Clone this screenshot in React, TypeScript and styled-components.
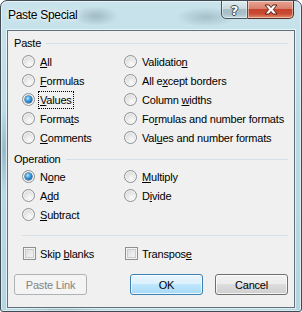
import React from 'react';
import styled, { createGlobalStyle } from 'styled-components';

const GlobalStyle = createGlobalStyle`
  html, body {
    margin: 0;
    padding: 0;
    background: #ffffff;
  }
  body {
    font-family: "Liberation Sans", Arial, sans-serif;
  }
`;

type Option = {
  label: string;
  key: number; // index of the access key letter
};

const pasteOptions: Option[] = [
  { label: 'All', key: 0 },
  { label: 'Formulas', key: 0 },
  { label: 'Values', key: 0 },
  { label: 'Formats', key: 5 },
  { label: 'Comments', key: 0 },
  { label: 'Validation', key: 9 },
  { label: 'All except borders', key: 5 },
  { label: 'Column widths', key: 7 },
  { label: 'Formulas and number formats', key: 2 },
  { label: 'Values and number formats', key: 3 },
];

const operationOptions: Option[] = [
  { label: 'None', key: 1 },
  { label: 'Add', key: 1 },
  { label: 'Subtract', key: 0 },
  { label: 'Multiply', key: 0 },
  { label: 'Divide', key: 1 },
];

const Window = styled.div`
  position: relative;
  width: 302px;
  height: 312px;
  box-sizing: border-box;
  border: 1px solid #3f4a52;
  border-radius: 7px 7px 3px 3px;
  display: flex;
  flex-direction: column;
  overflow: hidden;
  background:
    radial-gradient(ellipse 22px 10px at 95px 15px, rgba(90, 110, 120, 0.35), transparent),
    radial-gradient(ellipse 30px 10px at 205px 16px, rgba(90, 110, 120, 0.3), transparent),
    radial-gradient(ellipse 6px 40px at 3px 150px, rgba(80, 120, 140, 0.35), transparent),
    radial-gradient(ellipse 40px 6px at 60px 310px, rgba(80, 120, 140, 0.3), transparent),
    linear-gradient(180deg, #c9e3ec 0%, #b9dbe5 40%, #b3d6e1 100%);
  box-shadow: inset 0 0 0 1px rgba(255, 255, 255, 0.55);
`;

const TitleBar = styled.div`
  height: 29px;
  flex: none;
  display: flex;
  align-items: flex-start;
  padding: 0 7px 0 7px;
`;

const Title = styled.div`
  font-size: 12px;
  letter-spacing: -0.3px;
  line-height: 29px;
  color: #000;
  text-shadow: 0 0 6px rgba(255, 255, 255, 0.9), 0 0 3px rgba(255, 255, 255, 0.9);
  flex: 1;
`;

const CaptionButtons = styled.div`
  display: flex;
  margin-top: -1px;
`;

const CaptionButton = styled.div<{ $variant: 'help' | 'close' }>`
  width: ${p => (p.$variant === 'close' ? 46 : 27)}px;
  height: 19px;
  box-sizing: border-box;
  border: 1px solid ${p => (p.$variant === 'close' ? '#5b2a22' : '#4a5559')};
  border-left-width: ${p => (p.$variant === 'close' ? 0 : 1)}px;
  border-radius: ${p => (p.$variant === 'close' ? '0 0 5px 0' : '0 0 0 5px')};
  display: flex;
  align-items: center;
  justify-content: center;
  background: ${p =>
    p.$variant === 'close'
      ? 'linear-gradient(180deg, #e8a493 0%, #d9816c 45%, #c5432c 50%, #c94a32 75%, #e08e6d 100%)'
      : 'linear-gradient(180deg, #dfecf0 0%, #c7d9df 45%, #a9bfc7 50%, #a8c0c8 75%, #c3dae2 100%)'};
  box-shadow: inset 0 0 0 1px rgba(255, 255, 255, 0.45);
`;

const HelpGlyph = styled.span`
  font-family: "DejaVu Sans", sans-serif;
  font-weight: bold;
  font-size: 13px;
  line-height: 1;
  color: #fff;
  text-shadow: 1px 0 0 #3c474c, -1px 0 0 #3c474c, 0 1px 0 #3c474c, 0 -1px 0 #3c474c;
  margin-top: 1px;
`;

const Client = styled.div`
  flex: 1;
  margin: 0 6px 3px 6px;
  border: 1px solid #61717c;
  box-shadow: 0 0 0 1px rgba(255, 255, 255, 0.6);
  background: #f0f0f0;
  display: flex;
  flex-direction: column;
  padding-top: 5px;
  font-size: 11px;
  letter-spacing: -0.2px;
  color: #000;
`;

const GroupHeader = styled.div<{ $gap: number }>`
  display: flex;
  align-items: center;
  height: 14px;
  margin-top: ${p => p.$gap}px;
  padding: 0 6px 0 6px;
  gap: 5px;

  &::after {
    content: '';
    flex: 1;
    height: 1px;
    background: #d5dfe5;
  }
`;

const OptionGrid = styled.div<{ $rows: number; $gap: number }>`
  display: grid;
  grid-auto-flow: column;
  grid-template-rows: repeat(${p => p.$rows}, 19px);
  grid-template-columns: 102px 1fr;
  margin-top: ${p => p.$gap}px;
  padding-left: 14px;
`;

const OptionRow = styled.label`
  display: flex;
  align-items: center;
  gap: 5px;
  white-space: nowrap;
`;

const RadioCircle = styled.span<{ $checked?: boolean }>`
  position: relative;
  width: 13px;
  height: 13px;
  box-sizing: border-box;
  border-radius: 50%;
  border: 1px solid #8d9194;
  background: radial-gradient(circle at 60% 70%, #fbfbfb 0%, #e6e6e6 45%, #cfd1d3 100%);
  box-shadow: inset 0 0 0 1px rgba(255, 255, 255, 0.7);
  flex: none;

  &::after {
    content: '';
    display: ${p => (p.$checked ? 'block' : 'none')};
    position: absolute;
    left: 2px;
    top: 2px;
    width: 7px;
    height: 7px;
    border-radius: 50%;
    background: radial-gradient(circle at 40% 35%, #bfe9ff 0%, #3a9ee0 40%, #175c9c 80%, #0f3f6f 100%);
    box-shadow: 0 0 0 0.5px #184c7a;
  }
`;

const CheckBox = styled.span`
  width: 13px;
  height: 13px;
  box-sizing: border-box;
  border: 1px solid #8e8f8f;
  background: linear-gradient(135deg, #d4d6d8 0%, #e9eaea 50%, #f8f8f8 100%);
  box-shadow: inset 0 0 0 1px #f4f4f4, inset 0 0 0 2px #c9cbcd;
  flex: none;
`;

const LabelText = styled.span<{ $focused?: boolean }>`
  padding: 1px 1px;
  margin-left: -1px;
  outline: ${p => (p.$focused ? '1px dotted #000' : 'none')};
  outline-offset: 0;
  line-height: 14px;
`;

const Separator = styled.div`
  height: 1px;
  background: #d5dfe5;
  margin: 11px 6px 0 14px;
`;

const CheckGrid = styled.div`
  display: grid;
  grid-template-columns: 102px 1fr;
  height: 19px;
  margin-top: 8px;
  padding-left: 15px;
`;

const CheckRow = styled.label`
  display: flex;
  align-items: center;
  gap: 4px;
`;

const ButtonRow = styled.div`
  display: flex;
  gap: 12px;
  margin-top: 11px;
  padding: 0 6px 0 6px;
`;

const PushButton = styled.button<{ $kind?: 'default' | 'disabled' }>`
  width: 73px;
  height: 21px;
  box-sizing: border-box;
  font-family: "Liberation Sans", Arial, sans-serif;
  font-size: 11px;
  letter-spacing: -0.2px;
  padding: 0;
  border-radius: 3px;
  border: 1px solid
    ${p => (p.$kind === 'default' ? '#3c7fb1' : p.$kind === 'disabled' ? '#adb2b5' : '#707070')};
  color: ${p => (p.$kind === 'disabled' ? '#838383' : '#000')};
  background: ${p =>
    p.$kind === 'default'
      ? 'linear-gradient(180deg, #eaf6fd 0%, #d9f0fc 50%, #bee6fd 50%, #a7d9f5 100%)'
      : p.$kind === 'disabled'
      ? '#f4f4f4'
      : 'linear-gradient(180deg, #f2f2f2 0%, #ebebeb 50%, #dddddd 50%, #cfcfcf 100%)'};
  box-shadow: ${p =>
    p.$kind === 'disabled' ? 'none' : 'inset 0 0 0 1px rgba(255, 255, 255, 0.75)'};

  &:first-child {
    margin-right: 31px;
  }
`;

const Label: React.FC<{ option: Option; focused?: boolean }> = ({ option, focused }) => {
  const { label, key } = option;
  return (
    <LabelText $focused={focused}>
      {label.slice(0, key)}
      <u>{label[key]}</u>
      {label.slice(key + 1)}
    </LabelText>
  );
};

const CloseIcon = () => (
  <svg width="16" height="11" viewBox="0 0 16 11">
    <path
      d="M2 1 L6 1 L8 3.5 L10 1 L14 1 L10.3 5.5 L14 10 L10 10 L8 7.5 L6 10 L2 10 L5.7 5.5 Z"
      fill="#ffffff"
      stroke="#5a2217"
      strokeWidth="1"
      strokeLinejoin="round"
    />
  </svg>
);

const App: React.FC = () => {
  return (
    <>
      <GlobalStyle />
      <Window>
        <TitleBar>
          <Title>Paste Special</Title>
          <CaptionButtons>
            <CaptionButton $variant="help">
              <HelpGlyph>?</HelpGlyph>
            </CaptionButton>
            <CaptionButton $variant="close">
              <CloseIcon />
            </CaptionButton>
          </CaptionButtons>
        </TitleBar>

        <Client>
          <GroupHeader $gap={0}>Paste</GroupHeader>
          <OptionGrid $rows={5} $gap={2}>
            {pasteOptions.map((option, i) => (
              <OptionRow key={option.label}>
                <RadioCircle $checked={i === 2} />
                <Label option={option} focused={i === 2} />
              </OptionRow>
            ))}
          </OptionGrid>

          <GroupHeader $gap={5}>Operation</GroupHeader>
          <OptionGrid $rows={3} $gap={1}>
            {operationOptions.map((option, i) => (
              <OptionRow key={option.label}>
                <RadioCircle $checked={i === 0} />
                <Label option={option} />
              </OptionRow>
            ))}
          </OptionGrid>

          <Separator />

          <CheckGrid>
            <CheckRow>
              <CheckBox />
              <Label option={{ label: 'Skip blanks', key: 5 }} />
            </CheckRow>
            <CheckRow>
              <CheckBox />
              <Label option={{ label: 'Transpose', key: 8 }} />
            </CheckRow>
          </CheckGrid>

          <ButtonRow>
            <PushButton $kind="disabled">Paste Link</PushButton>
            <PushButton $kind="default">OK</PushButton>
            <PushButton>Cancel</PushButton>
          </ButtonRow>
        </Client>
      </Window>
    </>
  );
};

export default App;
